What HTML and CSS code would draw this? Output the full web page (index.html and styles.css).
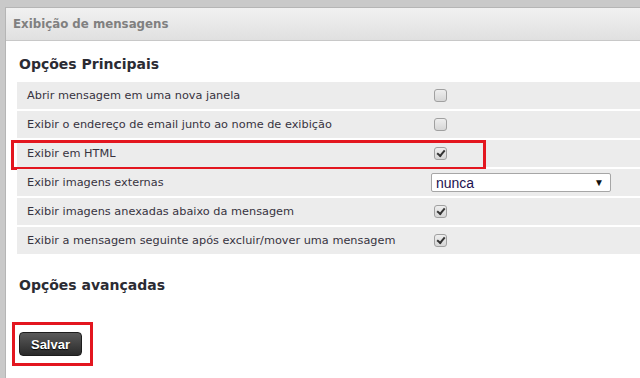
FILE: index.html
```html
<!DOCTYPE html>
<html lang="pt">
  <head>
    <meta charset="UTF-8" />
    <title>Exibição de mensagens</title>
    <link rel="stylesheet" href="styles.css">
  </head>
  <body>
    <div class="panel">
      <div class="panel-head">Exibição de mensagens</div>
      <div class="panel-body">
        <h2 class="section">Opções Principais</h2>
        <div class="rows">
          <div class="row">
            <span class="label">Abrir mensagem em uma nova janela</span>
            <span class="field"><span class="check"></span></span>
          </div>
          <div class="row">
            <span class="label">Exibir o endereço de email junto ao nome de exibição</span>
            <span class="field"><span class="check"></span></span>
          </div>
          <div class="row">
            <span class="label">Exibir em HTML</span>
            <span class="field"><span class="check on"></span></span>
            <span class="mark mark-row"></span>
          </div>
          <div class="row">
            <span class="label">Exibir imagens externas</span>
            <span class="field">
              <span class="select">nunca<span class="arrow">▼</span></span>
            </span>
          </div>
          <div class="row">
            <span class="label">Exibir imagens anexadas abaixo da mensagem</span>
            <span class="field"><span class="check on"></span></span>
          </div>
          <div class="row">
            <span class="label">Exibir a mensagem seguinte após excluir/mover uma mensagem</span>
            <span class="field"><span class="check on"></span></span>
          </div>
        </div>
        <h2 class="section advanced">Opções avançadas</h2>
        <div class="actions">
          <button class="save">Salvar</button>
          <span class="mark mark-btn"></span>
        </div>
      </div>
    </div>
  </body>
</html>
```

FILE: styles.css
```css
* {
  box-sizing: border-box;
}

html,
body {
  margin: 0;
  padding: 0;
  height: 100%;
  overflow: hidden;
}

body {
  background-color: #c9c9c9;
  padding: 7px 0 0 5px;
  font-family: "DejaVu Sans", Verdana, sans-serif;
}

.panel {
  background-color: #fff;
  border-left: 1px solid #b5b5b5;
  border-top: 1px solid #b5b5b5;
  height: 100%;
}

.panel-head {
  height: 33px;
  padding: 0 0 0 7px;
  line-height: 32px;
  font-size: 11.8px;
  font-weight: bold;
  color: #808080;
  background: linear-gradient(#f1f1f1, #e0e0e0);
  border-bottom: 1px solid #c8c8c8;
}

.panel-body {
  padding: 0 0 0 11px;
}

.section {
  margin: 0;
  padding: 15px 0 0 2px;
  height: 41px;
  font-size: 14px;
  font-weight: bold;
  color: #2b2b33;
}

.rows {
  display: flex;
  flex-direction: column;
  gap: 2px;
}

.row {
  position: relative;
  display: flex;
  align-items: center;
  height: 27px;
  background-color: #ececec;
}

.label {
  width: 414px;
  padding-left: 10px;
  font-size: 11.3px;
  color: #37333f;
}

.field {
  display: flex;
  align-items: center;
}

.check {
  position: relative;
  display: block;
  width: 13px;
  height: 13px;
  margin-left: 3px;
  border: 1px solid #a0a0a0;
  border-radius: 3px;
  background: linear-gradient(#eeeeee, #d6d6d6);
}

.check.on::after {
  content: "";
  position: absolute;
  left: 2px;
  top: 2px;
  width: 6px;
  height: 3px;
  border-left: 2px solid #333;
  border-bottom: 2px solid #333;
  transform: rotate(-50deg);
}

.select {
  display: flex;
  align-items: center;
  justify-content: space-between;
  width: 180px;
  height: 19px;
  padding: 0 6px 0 4px;
  background-color: #fff;
  border: 1px solid #a6a6a6;
  border-radius: 2px;
  font-family: "Liberation Sans", Arial, sans-serif;
  font-size: 14px;
  color: #1c1150;
}

.arrow {
  font-size: 10px;
  color: #111;
}

.advanced {
  padding-top: 23px;
  height: 78px;
}

.actions {
  position: relative;
  padding-left: 2px;
}

.save {
  width: 63px;
  height: 24px;
  padding: 0;
  border: 1px solid #1d1d1d;
  border-radius: 4px;
  background: linear-gradient(#5a5a5a, #2a2a2a);
  color: #fff;
  font-family: "Liberation Sans", Arial, sans-serif;
  font-size: 13px;
  font-weight: bold;
  text-shadow: 0 1px 1px #000;
}

.mark {
  position: absolute;
  border: 3px solid #e3161f;
}

.mark-row {
  left: -6px;
  top: 0;
  width: 475px;
  height: 30px;
}

.mark-btn {
  left: -5px;
  top: -10px;
  width: 81px;
  height: 44px;
}
```
